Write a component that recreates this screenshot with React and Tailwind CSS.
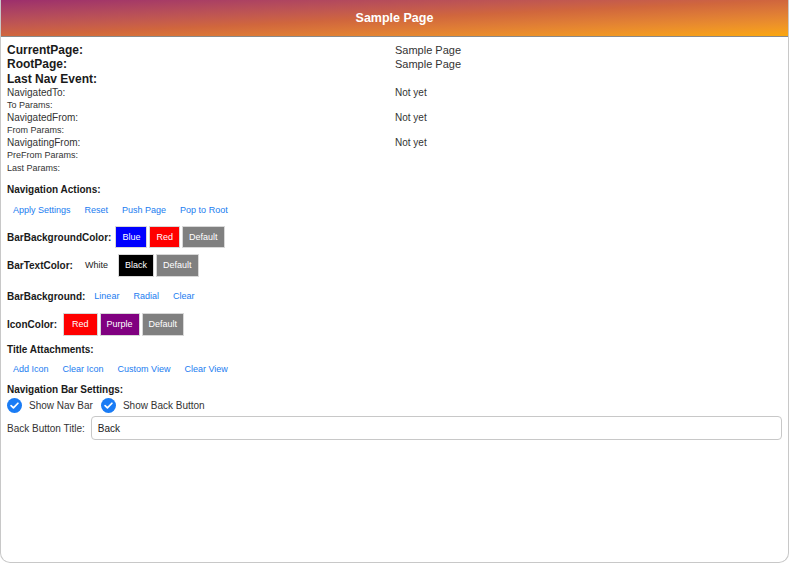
import React from 'react';

const font = { fontFamily: '"Liberation Sans", Arial, sans-serif' };

function LinkBtn({ children }) {
  return (
    <button className="px-[6px] h-full text-[9px] text-[#1a7cf0] leading-none">{children}</button>
  );
}

function ColorBtn({ children, className }) {
  return (
    <button className={`h-full px-[6px] text-[9px] leading-none text-white border border-[#d8d8d8] ${className}`}>
      {children}
    </button>
  );
}

function Check({ label }) {
  return (
    <div className="flex items-center gap-[7px]">
      <svg width="15" height="15" viewBox="0 0 14 14">
        <circle cx="7" cy="7" r="7" fill="#1a7cf5" />
        <path d="M3.8 7.2 L6 9.3 L10.2 4.9" stroke="white" strokeWidth="1.6" fill="none" strokeLinecap="round" strokeLinejoin="round" />
      </svg>
      <span className="text-[10px] text-[#333]">{label}</span>
    </div>
  );
}

export default function App() {
  const rows = [
    { label: 'CurrentPage:', value: 'Sample Page', h: 'h-[14px]', cls: 'text-[12px] font-bold text-[#1a1a1a]', vcls: 'text-[11px]' },
    { label: 'RootPage:', value: 'Sample Page', h: 'h-[14px]', cls: 'text-[12px] font-bold text-[#1a1a1a]', vcls: 'text-[11px]' },
    { label: 'Last Nav Event:', value: '', h: 'h-[15px]', cls: 'text-[12px] font-bold text-[#1a1a1a]' },
    { label: 'NavigatedTo:', value: 'Not yet', h: 'h-[13px]', cls: 'text-[10px] text-[#333]', vcls: 'text-[10px]' },
    { label: 'To Params:', value: '', h: 'h-[12px]', cls: 'text-[9px] text-[#333]' },
    { label: 'NavigatedFrom:', value: 'Not yet', h: 'h-[13px]', cls: 'text-[10px] text-[#333]', vcls: 'text-[10px]' },
    { label: 'From Params:', value: '', h: 'h-[12px]', cls: 'text-[9px] text-[#333]' },
    { label: 'NavigatingFrom:', value: 'Not yet', h: 'h-[13px]', cls: 'text-[10px] text-[#333]', vcls: 'text-[10px]' },
    { label: 'PreFrom Params:', value: '', h: 'h-[13px]', cls: 'text-[9px] text-[#333]' },
    { label: 'Last Params:', value: '', h: 'h-[12px]', cls: 'text-[9px] text-[#333]' },
  ];

  return (
    <div style={font} className="w-[789px] h-[563px] bg-white flex flex-col overflow-hidden rounded-b-[10px] border-x border-b border-[#c8c8c8]">
      <div className="h-[37px] shrink-0 flex items-center justify-center bg-linear-to-br from-[#9c2e6c] via-[#d0663d] to-[#fba70a] border-b border-[#8a8a8a]">
        <span className="text-white font-bold text-[12.5px]">Sample Page</span>
      </div>

      <div className="flex flex-col px-[6px] pt-[6px]">
        <div className="grid grid-cols-[388px_1fr]">
          {rows.map((r) => (
            <React.Fragment key={r.label}>
              <div className={`${r.h} flex items-center leading-none ${r.cls}`}>{r.label}</div>
              <div className={`${r.h} flex items-center leading-none text-[#333] ${r.vcls || ''}`}>{r.value}</div>
            </React.Fragment>
          ))}
        </div>

        <div className="mt-[8px] h-[14px] flex items-center text-[10px] font-bold text-[#1a1a1a]">Navigation Actions:</div>
        <div className="mt-[4px] h-[20px] flex items-center gap-[2px]">
          <LinkBtn>Apply Settings</LinkBtn>
          <LinkBtn>Reset</LinkBtn>
          <LinkBtn>Push Page</LinkBtn>
          <LinkBtn>Pop to Root</LinkBtn>
        </div>

        <div className="mt-[6px] h-[22px] flex items-center">
          <span className="text-[10px] font-bold text-[#1a1a1a] mr-[4px]">BarBackgroundColor:</span>
          <div className="flex h-full gap-[2px]">
            <ColorBtn className="bg-[#0000ff]">Blue</ColorBtn>
            <ColorBtn className="bg-[#ff0000]">Red</ColorBtn>
            <ColorBtn className="bg-[#808080]">Default</ColorBtn>
          </div>
        </div>

        <div className="mt-[6px] h-[23px] flex items-center">
          <span className="text-[10px] font-bold text-[#1a1a1a] mr-[4px]">BarTextColor:</span>
          <div className="flex h-full gap-[2px]">
            <button className="h-full px-[8px] text-[9px] text-[#222] bg-white">White</button>
            <ColorBtn className="bg-black">Black</ColorBtn>
            <ColorBtn className="bg-[#808080]">Default</ColorBtn>
          </div>
        </div>

        <div className="mt-[9px] h-[20px] flex items-center">
          <span className="text-[10px] font-bold text-[#1a1a1a] mr-[3px]">BarBackground:</span>
          <LinkBtn>Linear</LinkBtn>
          <span className="w-[2px]" />
          <LinkBtn>Radial</LinkBtn>
          <span className="w-[2px]" />
          <LinkBtn>Clear</LinkBtn>
        </div>

        <div className="mt-[7px] h-[23px] flex items-center">
          <span className="text-[10px] font-bold text-[#1a1a1a] mr-[6px]">IconColor:</span>
          <div className="flex h-full gap-[2px]">
            <ColorBtn className="bg-[#ff0000] px-[8px]">Red</ColorBtn>
            <ColorBtn className="bg-[#800080]">Purple</ColorBtn>
            <ColorBtn className="bg-[#808080]">Default</ColorBtn>
          </div>
        </div>

        <div className="mt-[6px] h-[14px] flex items-center text-[10px] font-bold text-[#1a1a1a]">Title Attachments:</div>
        <div className="mt-[3px] h-[20px] flex items-center gap-[2px]">
          <LinkBtn>Add Icon</LinkBtn>
          <LinkBtn>Clear Icon</LinkBtn>
          <LinkBtn>Custom View</LinkBtn>
          <LinkBtn>Clear View</LinkBtn>
        </div>

        <div className="mt-[3px] h-[14px] flex items-center text-[10px] font-bold text-[#1a1a1a]">Navigation Bar Settings:</div>
        <div className="mt-[1px] h-[16px] flex items-center gap-[8px]">
          <Check label="Show Nav Bar" />
          <Check label="Show Back Button" />
        </div>

        <div className="mt-[3px] h-[24px] flex items-center gap-[6px]">
          <span className="text-[10px] text-[#333] whitespace-nowrap">Back Button Title:</span>
          <div className="flex-1 h-full flex items-center px-[6px] border border-[#c8c8c8] rounded-[4px] text-[10px] text-[#222]">
            Back
          </div>
        </div>
      </div>
    </div>
  );
}
